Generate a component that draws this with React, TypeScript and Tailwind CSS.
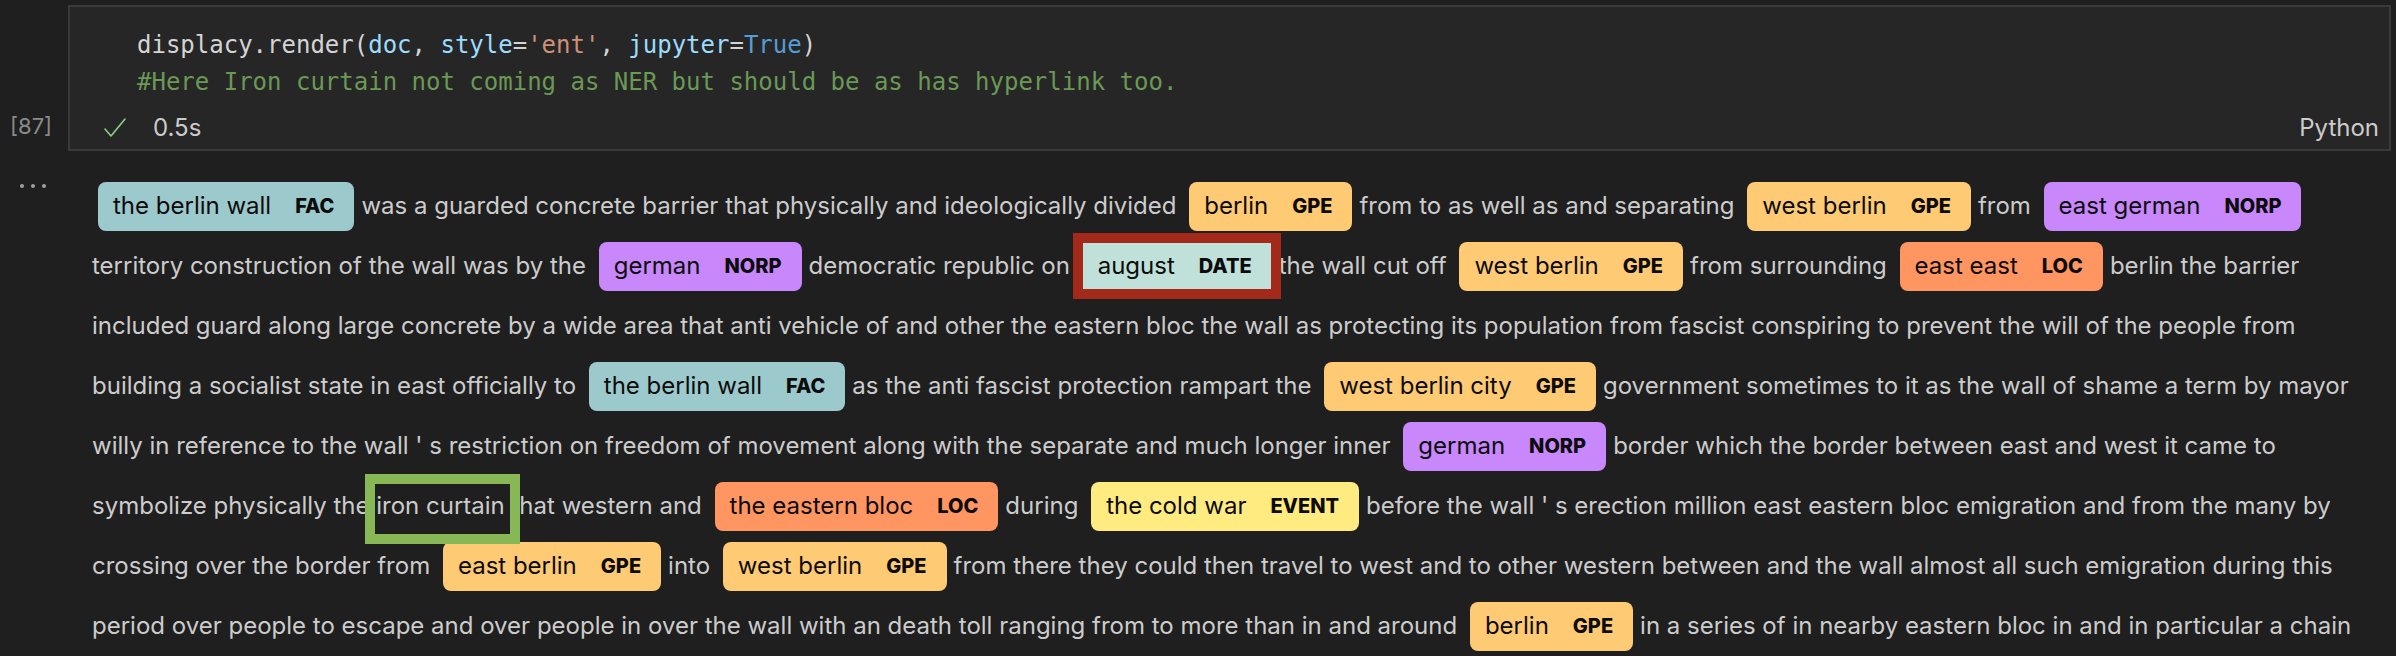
import React from 'react'

type Ent = { t: string; l: string; red?: boolean }
type Seg = string | Ent | { iron: string }

const colors: Record<string, string> = {
  FAC: 'bg-[#9cc9cc]',
  GPE: 'bg-[#feca74]',
  NORP: 'bg-[#c887fb]',
  DATE: 'bg-[#bfe1d9]',
  LOC: 'bg-[#ff9561]',
  EVENT: 'bg-[#ffeb80]',
}

const lines: Seg[][] = [
  [
    { t: 'the berlin wall', l: 'FAC' },
    'was a guarded concrete barrier that physically and ideologically divided ',
    { t: 'berlin', l: 'GPE' },
    'from to as well as and separating ',
    { t: 'west berlin', l: 'GPE' },
    'from ',
    { t: 'east german', l: 'NORP' },
  ],
  [
    'territory construction of the wall was by the ',
    { t: 'german', l: 'NORP' },
    'democratic republic on ',
    { t: 'august', l: 'DATE', red: true },
    'the wall cut off ',
    { t: 'west berlin', l: 'GPE' },
    'from surrounding ',
    { t: 'east east', l: 'LOC' },
    'berlin the barrier',
  ],
  [
    'included guard along large concrete by a wide area that anti vehicle of and other the eastern bloc the wall as protecting its population from fascist conspiring to prevent the will of the people from',
  ],
  [
    'building a socialist state in east officially to ',
    { t: 'the berlin wall', l: 'FAC' },
    'as the anti fascist protection rampart the ',
    { t: 'west berlin city', l: 'GPE' },
    'government sometimes to it as the wall of shame a term by mayor',
  ],
  [
    "willy in reference to the wall ' s restriction on freedom of movement along with the separate and much longer inner ",
    { t: 'german', l: 'NORP' },
    'border which the border between east and west it came to',
  ],
  [
    'symbolize physically the ',
    { iron: 'iron curtain' },
    ' that western and ',
    { t: 'the eastern bloc', l: 'LOC' },
    'during ',
    { t: 'the cold war', l: 'EVENT' },
    "before the wall ' s erection million east eastern bloc emigration and from the many by",
  ],
  [
    'crossing over the border from ',
    { t: 'east berlin', l: 'GPE' },
    'into ',
    { t: 'west berlin', l: 'GPE' },
    'from there they could then travel to west and to other western between and the wall almost all such emigration during this',
  ],
  [
    'period over people to escape and over people in over the wall with an death toll ranging from to more than in and around ',
    { t: 'berlin', l: 'GPE' },
    'in a series of in nearby eastern bloc in and in particular a chain',
  ],
]

function Entity({ e }: { e: Ent }) {
  const mark = (
    <span
      className={`inline-flex items-center h-[49px] pl-[15px] pr-[20px] text-[#0c0c0c] ${colors[e.l]} ${e.red ? 'rounded-none' : 'rounded-[8px]'}`}
    >
      <span>{e.t}</span>
      <span className="ml-[24px] text-[20px] font-extrabold leading-none">{e.l}</span>
    </span>
  )
  if (!e.red) return <span className="ml-[6px] mr-[7px] flex">{mark}</span>
  return (
    <span className="relative ml-[6px] mr-[7px] flex">
      {mark}
      <span className="absolute -left-[10px] -right-[9px] -top-[9px] -bottom-[8px] border-[10px] border-[#a3291b]" />
    </span>
  )
}

function Line({ segs }: { segs: Seg[] }) {
  return (
    <div className="flex items-center h-[60px] whitespace-pre">
      {segs.map((s, i) => {
        if (typeof s === 'string') return <span key={i}>{s}</span>
        if ('iron' in s)
          return (
            <span key={i} className="relative">
              {s.iron}
              <span className="absolute -left-[11px] -right-[15px] -top-[14px] -bottom-[20px] border-[10px] border-[#88b755]" />
            </span>
          )
        return <Entity key={i} e={s} />
      })}
    </div>
  )
}

export default function App() {
  return (
    <div className="w-[2396px] h-[656px] overflow-hidden bg-[#1f1f1f] font-[Inter,sans-serif] text-[#cccccc]">
      {/* code cell */}
      <div className="flex pt-[5px]">
        <div className="w-[68px] flex items-end pb-[8px] pl-[10px] text-[22px] text-[#8a8a8a]">[87]</div>
        <div className="w-[2323px] h-[146px] border-2 border-[#3a3a3d] bg-[#262626] flex flex-col">
          <div className="pl-[67px] pt-[20px] font-['DejaVu_Sans_Mono',monospace] text-[24px] leading-[37px] whitespace-pre">
            <div>
              <span className="text-[#d4d4d4]">displacy.render(</span>
              <span className="text-[#9cdcfe]">doc</span>
              <span className="text-[#d4d4d4]">, </span>
              <span className="text-[#9cdcfe]">style</span>
              <span className="text-[#d4d4d4]">=</span>
              <span className="text-[#ce9178]">'ent'</span>
              <span className="text-[#d4d4d4]">, </span>
              <span className="text-[#9cdcfe]">jupyter</span>
              <span className="text-[#d4d4d4]">=</span>
              <span className="text-[#569cd6]">True</span>
              <span className="text-[#d4d4d4]">)</span>
            </div>
            <div className="text-[#6a9955]">#Here Iron curtain not coming as NER but should be as has hyperlink too.</div>
          </div>
          <div className="mt-auto mb-[6px] flex items-center h-[30px] pl-[33px] pr-[10px] text-[24px]">
            <svg width="24" height="24" viewBox="0 0 24 24" fill="none" stroke="#89d185" strokeWidth="1.6" strokeLinecap="round" strokeLinejoin="round">
              <polyline points="2,13 8,20 22,3" />
            </svg>
            <span className="ml-[26px]">0.5s</span>
            <span className="ml-auto">Python</span>
          </div>
        </div>
      </div>

      {/* output */}
      <div className="flex mt-[25px] text-[24px]">
        <div className="w-[92px] shrink-0 pl-[20px] pt-[8px]">
          <div className="flex gap-[7px]">
            <span className="w-[4px] h-[4px] rounded-full bg-[#a0a0a0]" />
            <span className="w-[4px] h-[4px] rounded-full bg-[#a0a0a0]" />
            <span className="w-[4px] h-[4px] rounded-full bg-[#a0a0a0]" />
          </div>
        </div>
        <div className="flex-1 min-w-0">
          {lines.map((segs, i) => (
            <Line key={i} segs={segs} />
          ))}
        </div>
      </div>
    </div>
  )
}
